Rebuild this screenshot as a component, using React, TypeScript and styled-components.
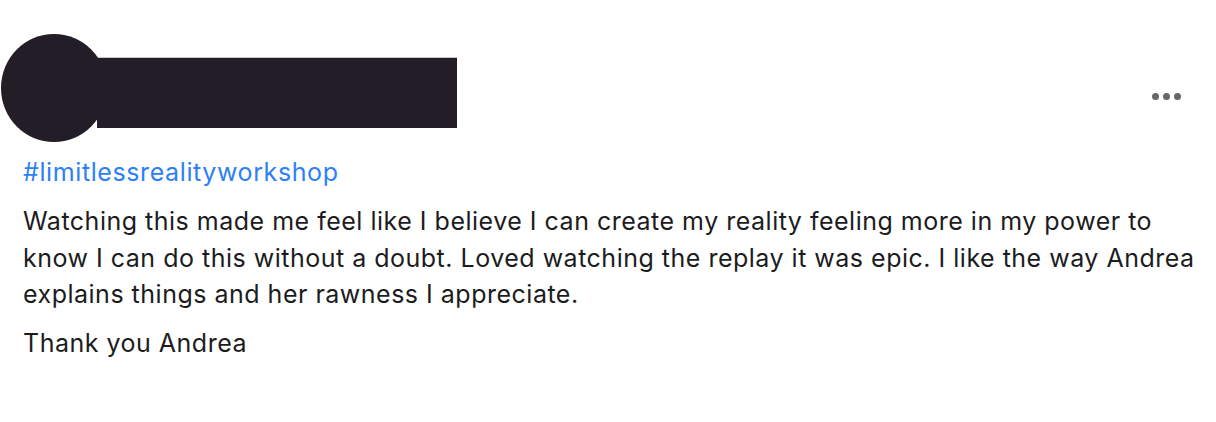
import React from "react";
import styled, { createGlobalStyle } from "styled-components";

const Global = createGlobalStyle`
  html, body { margin: 0; padding: 0; background: #ffffff; }
  body { font-family: Inter, "Noto Sans", "Liberation Sans", sans-serif; }
`;

const Post = styled.article`
  width: 1216px;
  height: 422px;
  box-sizing: border-box;
  padding: 34px 0 0 23px;
  background: #fff;
  display: flex;
  flex-direction: column;
`;

const Header = styled.header`
  display: flex;
  align-items: flex-start;
  margin-left: -22px;
  position: relative;
`;

const Avatar = styled.div`
  width: 106px;
  height: 108px;
  border-radius: 50%;
  background: #231d28;
  flex: none;
  position: relative;
  z-index: 1;
`;

const NameBar = styled.div`
  margin-left: -10px;
  margin-top: 23px;
  width: 360px;
  height: 70px;
  background: #231d28;
  border-top: 1px solid #c9c7cb;
`;

const More = styled.button`
  margin-left: auto;
  margin-right: 35px;
  margin-top: 59px;
  display: flex;
  gap: 4px;
  border: none;
  background: none;
  padding: 0;
`;

const Dot = styled.span`
  width: 7px;
  height: 7px;
  border-radius: 50%;
  background: #65676b;
`;

const Body = styled.div`
  margin-top: 12px;
  color: #1c1c1e;
  font-size: 25px;
  line-height: 36.3px;
  letter-spacing: 0.5px;
`;

const Hashtag = styled.a`
  display: block;
  color: #2d80f6;
  text-decoration: none;
  letter-spacing: 0.6px;
  margin-bottom: 13px;
`;

const Para = styled.p<{ $gap?: number }>`
  margin: 0 0 ${(p) => p.$gap ?? 0}px 0;
  width: 1190px;
`;

export default function App() {
  return (
    <>
      <Global />
      <Post>
        <Header>
          <Avatar />
          <NameBar />
          <More aria-label="More">
            <Dot />
            <Dot />
            <Dot />
          </More>
        </Header>
        <Body>
          <Hashtag href="#">#limitlessrealityworkshop</Hashtag>
          <Para $gap={13}>
            Watching this made me feel like I believe I can create my reality feeling more in my power to
            <br />
            know I can do this without a doubt. Loved watching the replay it was epic. I like the way Andrea
            <br />
            explains things and her rawness I appreciate.
          </Para>
          <Para>Thank you Andrea</Para>
        </Body>
      </Post>
    </>
  );
}
